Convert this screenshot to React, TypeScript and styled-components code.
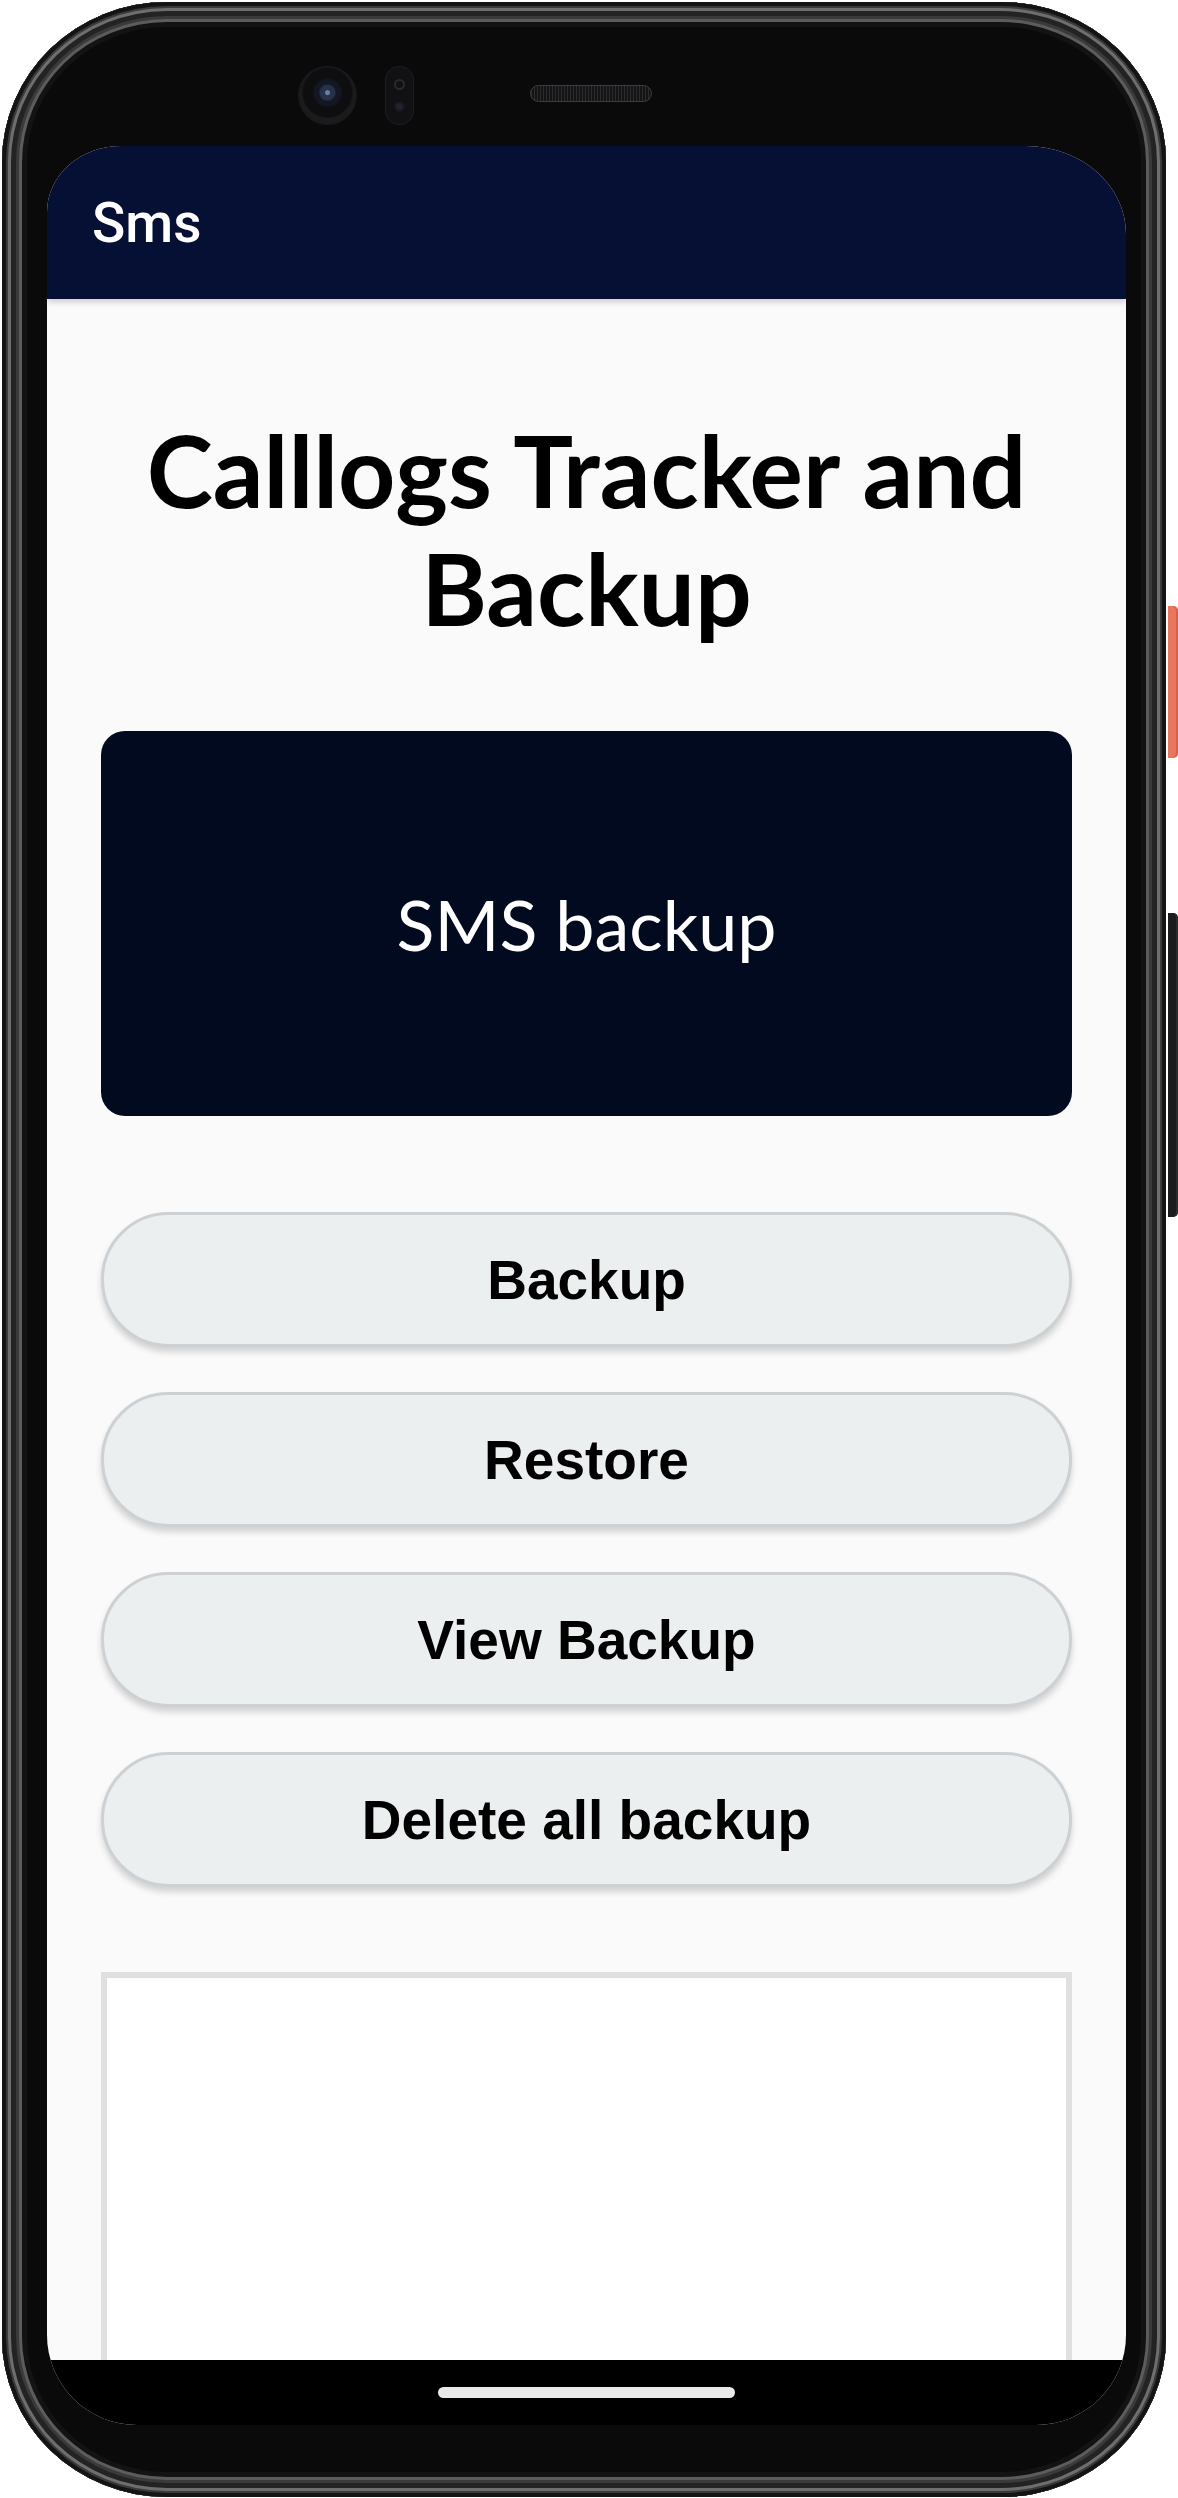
import React from "react";
import styled, { createGlobalStyle } from "styled-components";

const Global = createGlobalStyle`
  html, body { margin: 0; padding: 0; background: #ffffff; }
  body {
    width: 1178px;
    height: 2498px;
    overflow: hidden;
    font-family: Roboto, "Liberation Sans", sans-serif;
  }
  * { box-sizing: border-box; }
`;

const Stage = styled.div`
  display: flex;
  align-items: flex-start;
  width: 1178px;
  height: 2498px;
  padding: 2px 0 0 2px;
`;

const Phone = styled.div`
  width: 1164px;
  height: 2495px;
  flex-shrink: 0;
  border-radius: 165px / 160px;
  background: #0a0a0b;
  box-shadow:
    inset 0 0 0 4px #141414,
    inset 0 0 0 6px #3a3a3a,
    inset 0 0 0 9px #6e6e6e,
    inset 0 0 0 14px #232323,
    inset 0 0 0 17px #3a3a3a,
    inset 0 0 0 20px #5c5c5c,
    inset 0 0 0 25px #131313;
  display: flex;
  flex-direction: column;
`;

const TopBezel = styled.div`
  height: 144px;
  flex-shrink: 0;
  display: flex;
  align-items: flex-start;
  padding: 65px 0 0 297px;
`;

const Camera = styled.div`
  width: 57px;
  height: 57px;
  border-radius: 50%;
  background: radial-gradient(circle at 50% 45%, #6d7ea0 0 2px, #26324a 3px 7px, #121722 9px 13px, #0e0e10 15px 24px, #1b1b1d 26px 28px);
  box-shadow: 0 0 0 1px #1c1c1e;
`;

const Sensor = styled.div`
  width: 27px;
  height: 57px;
  margin-left: 30px;
  border-radius: 14px;
  background: #111113;
  box-shadow: 0 0 0 1px #1e1e20;
  display: flex;
  flex-direction: column;
  align-items: center;
  justify-content: space-around;
  padding: 6px 0;
`;

const SensorDot = styled.div<{ $ring?: boolean }>`
  width: 11px;
  height: 11px;
  border-radius: 50%;
  background: ${(p) => (p.$ring ? "transparent" : "#1f2330")};
  border: 2px solid ${(p) => (p.$ring ? "#2a2a2c" : "#16181e")};
`;

const Speaker = styled.div`
  width: 122px;
  height: 17px;
  margin: 18px 0 0 117px;
  border-radius: 9px;
  border: 1px solid #3c3c3e;
  background:
    repeating-linear-gradient(90deg, #2c2c2e 0 1px, #141416 1px 3px),
    #141416;
`;

const Screen = styled.div`
  width: 1079px;
  height: 2279px;
  margin-left: 45px;
  flex-shrink: 0;
  border-radius: 74px 100px 90px 90px / 66px 88px 90px 90px;
  overflow: hidden;
  background: #fafafa;
  display: flex;
  flex-direction: column;
`;

const AppBar = styled.header`
  height: 153px;
  flex-shrink: 0;
  background: #061034;
  display: flex;
  align-items: center;
  padding-left: 45px;
  color: #ffffff;
  font-family: Roboto, "Liberation Sans", sans-serif;
  font-weight: 500;
  font-size: 55px;
  position: relative;
  z-index: 1;
  box-shadow: 0 3px 6px rgba(0, 0, 0, 0.18);
`;

const Content = styled.main`
  flex: 1;
  min-height: 0;
  overflow: hidden;
  padding: 111px 54px 0;
  display: flex;
  flex-direction: column;
`;

const Title = styled.h1`
  margin: 0;
  font-family: Lato, "Open Sans", sans-serif;
  font-weight: 700;
  font-size: 100px;
  line-height: 118px;
  text-align: center;
  color: #000000;
`;

const Banner = styled.div`
  margin-top: 85px;
  height: 385px;
  flex-shrink: 0;
  border-radius: 24px;
  background: #020a1f;
  display: flex;
  align-items: center;
  justify-content: center;
  color: #ffffff;
  font-family: Lato, "Open Sans", sans-serif;
  font-weight: 400;
  font-size: 70px;
`;

const ButtonList = styled.div`
  margin-top: 96px;
  display: flex;
  flex-direction: column;
  gap: 45px;
  flex-shrink: 0;
`;

const ActionButton = styled.button`
  height: 135px;
  width: 100%;
  border-radius: 68px;
  border: 3px solid #cdd1d4;
  background: #eceff0;
  box-shadow: 0 5px 6px rgba(0, 0, 0, 0.16);
  font-family: "Liberation Sans", Arial, sans-serif;
  font-weight: 700;
  font-size: 55px;
  color: #000000;
  display: flex;
  align-items: center;
  justify-content: center;
  padding: 0;
`;

const OutputBox = styled.div`
  margin-top: 85px;
  height: 700px;
  flex-shrink: 0;
  border: 6px solid #e0e0e0;
  background: #ffffff;
`;

const NavBar = styled.div`
  height: 65px;
  flex-shrink: 0;
  background: #000000;
  display: flex;
  align-items: center;
  justify-content: center;
`;

const HomePill = styled.div`
  width: 297px;
  height: 11px;
  border-radius: 6px;
  background: #e9e9e9;
`;

const SideRail = styled.div`
  margin-left: 2px;
  width: 10px;
  padding-top: 604px;
  display: flex;
  flex-direction: column;
  gap: 155px;
`;

const SideKey = styled.div<{ $h: number; $accent?: boolean }>`
  height: ${(p) => p.$h}px;
  width: 10px;
  border-radius: 0 5px 5px 0;
  background: ${(p) => (p.$accent ? "#e8775d" : "#1c1c1e")};
  box-shadow: ${(p) => (p.$accent ? "inset -2px 0 0 #d4624a" : "inset -2px 0 0 #2c2c2e")};
`;

const actions = ["Backup", "Restore", "View Backup", "Delete all backup"];

export default function App() {
  return (
    <>
      <Global />
      <Stage>
        <Phone>
          <TopBezel>
            <Camera />
            <Sensor>
              <SensorDot $ring />
              <SensorDot />
            </Sensor>
            <Speaker />
          </TopBezel>
          <Screen>
            <AppBar>Sms</AppBar>
            <Content>
              <Title>Calllogs Tracker and Backup</Title>
              <Banner>SMS backup</Banner>
              <ButtonList>
                {actions.map((a) => (
                  <ActionButton key={a}>{a}</ActionButton>
                ))}
              </ButtonList>
              <OutputBox />
            </Content>
            <NavBar>
              <HomePill />
            </NavBar>
          </Screen>
        </Phone>
        <SideRail>
          <SideKey $h={152} $accent />
          <SideKey $h={304} />
        </SideRail>
      </Stage>
    </>
  );
}
